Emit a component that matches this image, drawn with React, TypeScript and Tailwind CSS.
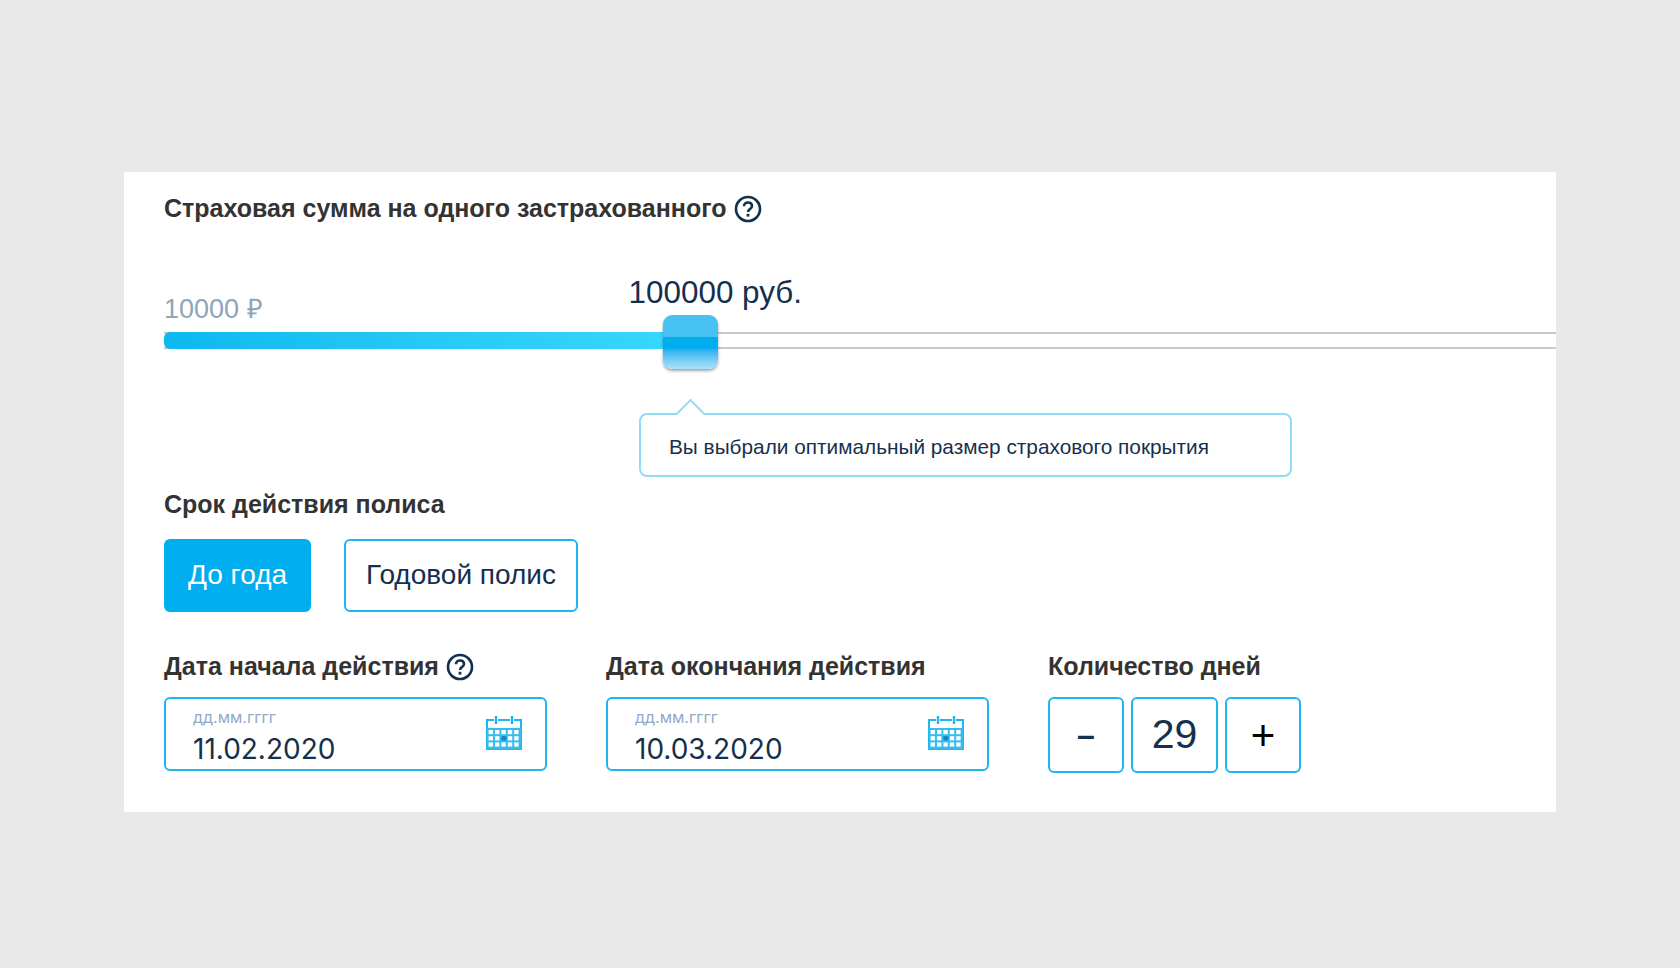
const FONT = "font-['Liberation_Sans',Arial,sans-serif]";

function HelpIcon() {
  return (
    <svg width="28" height="28" viewBox="0 0 28 28" className="shrink-0">
      <circle cx="14" cy="14" r="12" fill="none" stroke="#14304f" strokeWidth="2.6" />
      <path d="M10 11.2c0-2.3 1.8-3.7 4-3.7s4 1.3 4 3.4c0 1.6-.9 2.4-2.1 3.2-1.2.8-1.8 1.4-1.8 2.9" fill="none" stroke="#14304f" strokeWidth="2.6" />
      <rect x="12.6" y="18.8" width="2.8" height="2.8" fill="#14304f" />
    </svg>
  );
}

function CalendarIcon() {
  const cells = [];
  for (let r = 0; r < 3; r++) {
    for (let c = 0; c < 5; c++) {
      if (r === 1 && c === 2) continue;
      cells.push(<rect key={`${r}-${c}`} x={3.6 + c * 6.4} y={15 + r * 6.2} width="4.4" height="4.2" fill="#ffffff" />);
    }
  }
  return (
    <svg width="38" height="36" viewBox="0 0 38 36" className="mb-[3px]">
      <path d="M9 5H2v29h34V5h-7M13 5h12" fill="none" stroke="#1fb5ef" strokeWidth="2" />
      <path d="M11 1v8M27 1v8" stroke="#1fb5ef" strokeWidth="2.4" />
      <rect x="2" y="13" width="34" height="21" fill="#35bdf0" />
      <rect x="16.4" y="21.2" width="5" height="4.2" fill="#1583c4" />
      {cells}
    </svg>
  );
}

function DateField({ value, width }: { value: string; width: string }) {
  return (
    <div className={`flex h-[74px] items-center justify-between rounded-[6px] border-2 border-[#1fb5ef] pl-[27px] pr-[22px] ${width}`}>
      <div className="self-start pt-[10px]">
        <div className="font-['Inter',sans-serif] text-[16px] leading-[16px] text-[#93a9c9]">дд.мм.гггг</div>
        <div className="mt-[7px] font-['Inter',sans-serif] text-[28px] leading-[34px] text-[#17304d]">{value}</div>
      </div>
      <CalendarIcon />
    </div>
  );
}

function Label({ text, help }: { text: string; help?: boolean }) {
  return (
    <div className="flex h-[32px] items-center gap-[7px] text-[25px] font-bold text-[#333333]">
      {text}
      {help && <HelpIcon />}
    </div>
  );
}

export default function App() {
  return (
    <div className={`min-h-screen bg-[#e9e9e9] pl-[124px] pt-[172px] ${FONT}`}>
      <div className="h-[640px] w-[1432px] overflow-hidden bg-white pl-[40px] pt-[21px]">
        <Label text="Страховая сумма на одного застрахованного" help />

        <div className="mt-[56px] flex h-[52px] items-end">
          <span className="pb-[8px] text-[27px] leading-[32px] text-[#8fa5b8]">10000 ₽</span>
          <span className="ml-[366px] pb-[22px] text-[31.4px] leading-[36px] text-[#14304f]">100000 руб.</span>
        </div>

        <div className="relative mt-[-1px] h-[17px] border-y-2 border-[#c9c9c9]">
          <div className="absolute left-0 top-[-2px] h-[17px] w-[505px] rounded-l-[6px] bg-gradient-to-r from-[#0cb8ee] to-[#36d8ff]" />
          <div className="absolute left-[499px] top-[-19px] h-[54px] w-[55px] overflow-hidden rounded-[9px] shadow-[0_2px_3px_rgba(70,90,110,0.55)]">
            <div className="h-[22px] bg-[#47c2f2]" />
            <div className="h-[32px] bg-gradient-to-b from-[#00adef] from-35% to-[#a8e4fa]" />
          </div>
        </div>

        <div className="relative ml-[475px] mt-[64px] h-[64px] w-[653px] rounded-[8px] border-2 border-[#8fdcf8] pl-[28px]">
          <div className="absolute left-[39px] top-[-12px] h-[21px] w-[21px] rotate-45 border-l-2 border-t-2 border-[#8fdcf8] bg-white" />
          <p className="relative pt-[18px] text-[20.8px] leading-[28px] text-[#17304d]">Вы выбрали оптимальный размер страхового покрытия</p>
        </div>

        <div className="mt-[12px]">
          <Label text="Срок действия полиса" />
        </div>
        <div className="mt-[18px] flex gap-[33px]">
          <button className="h-[73px] w-[147px] rounded-[6px] bg-[#00adef] pb-[2px] text-[28px] text-white">До года</button>
          <button className="h-[73px] w-[234px] rounded-[6px] border-2 border-[#1fb5ef] pb-[2px] text-[28px] text-[#14304f]">Годовой полис</button>
        </div>

        <div className="mt-[39px] flex">
          <div className="w-[442px]">
            <Label text="Дата начала действия" help />
            <div className="mt-[14px]">
              <DateField value="11.02.2020" width="w-[383px]" />
            </div>
          </div>
          <div className="w-[442px]">
            <Label text="Дата окончания действия" />
            <div className="mt-[14px]">
              <DateField value="10.03.2020" width="w-[383px]" />
            </div>
          </div>
          <div>
            <Label text="Количество дней" />
            <div className="mt-[14px] flex h-[76px] gap-[7px] text-[#14304f]">
              <button className="w-[76px] rounded-[6px] border-2 border-[#1fb5ef] text-[32px] font-bold">–</button>
              <div className="flex w-[87px] items-center justify-center rounded-[6px] border-2 border-[#1fb5ef] text-[41px]">29</div>
              <button className="w-[76px] rounded-[6px] border-2 border-[#1fb5ef] pt-[2px] text-[42px] leading-none text-black">+</button>
            </div>
          </div>
        </div>
      </div>
    </div>
  );
}
